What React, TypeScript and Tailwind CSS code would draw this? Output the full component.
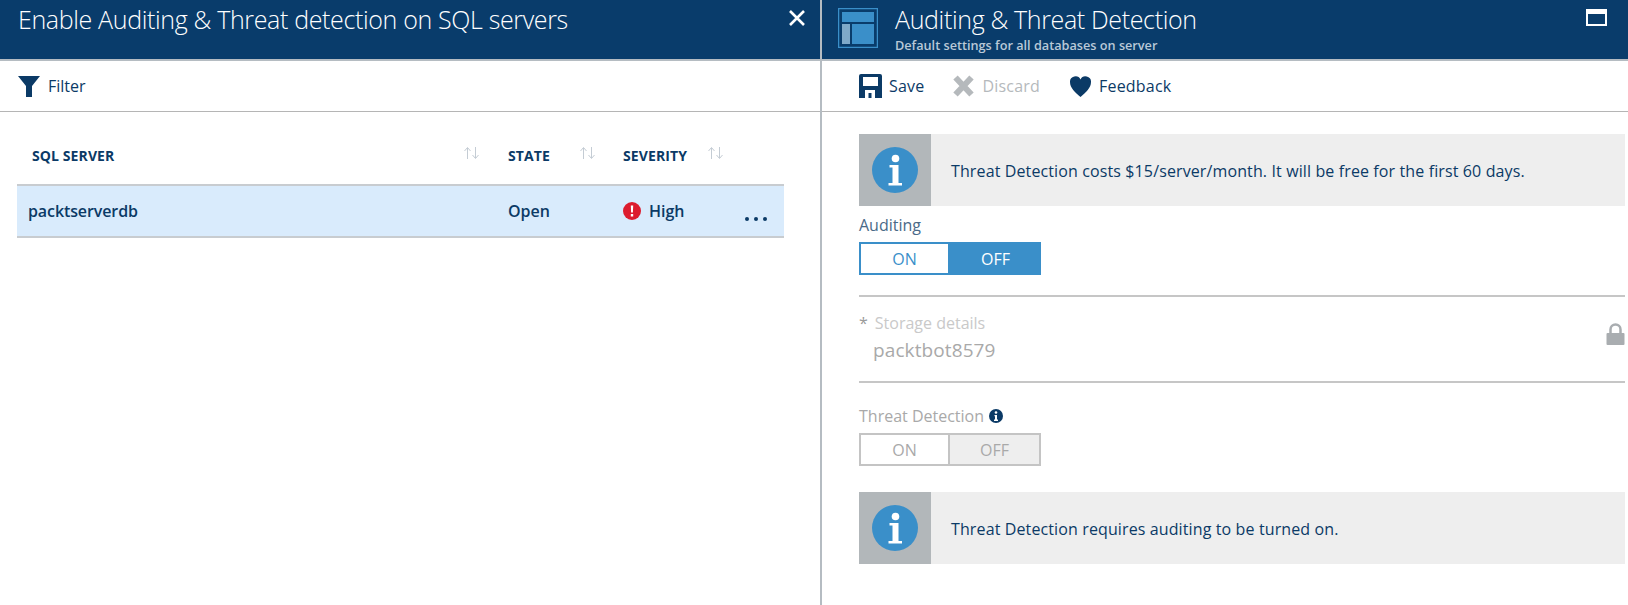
const font = { fontFamily: '"Open Sans", "Noto Sans", sans-serif' }

const SortArrows = ({ className }: { className: string }) => (
  <svg width="17" height="14" viewBox="0 0 17 14" fill="none" stroke="#c4ccd4" strokeWidth="1" className={className}>
    <path d="M4.5 13V2M1.5 5l3-3.5 3 3.5" />
    <path d="M12.5 1v11M9.5 9l3 3.5 3-3.5" />
  </svg>
)

const InfoTile = () => (
  <div className="flex h-full w-[72px] shrink-0 items-center justify-center bg-[#b2b7ba]">
    <svg width="46" height="46" viewBox="0 0 46 46">
      <circle cx="23" cy="23" r="23" fill="#3a8fc9" />
      <circle cx="23.5" cy="11.5" r="3.8" fill="#fff" />
      <path d="M17.5 18h9v18h3.5v2.500H16.500V36h4V20.500h-3z" fill="#fff" />
    </svg>
  </div>
)

const InfoBox = ({ text, className }: { text: string; className: string }) => (
  <div className={`flex h-[72px] items-center bg-[#eeeeee] ${className}`}>
    <InfoTile />
    <p className="ml-[20px] mt-[2px] text-[16px] tracking-[0.12px] text-[#0b3a66]">{text}</p>
  </div>
)

const Toggle = ({ disabled, className }: { disabled?: boolean; className: string }) => (
  <div className={`flex h-[33px] w-[182px] text-[16px] ${className}`}>
    <div
      className={`flex w-[91px] items-center justify-center border-2 bg-white ${
        disabled ? "border-[#c4c4c4] text-[#a9a9a9]" : "border-[#3a8fc9] text-[#3a8fc9]"
      }`}
    >
      ON
    </div>
    <div
      className={`flex w-[91px] items-center justify-center ${
        disabled ? "border-2 border-l-0 border-[#c4c4c4] bg-[#eeeeee] text-[#a9a9a9]" : "bg-[#3a8fc9] text-white"
      }`}
    >
      OFF
    </div>
  </div>
)

const headerCell = "text-[14px] font-bold tracking-[0.1px] text-[#0b3a66]"

export default function App() {
  return (
    <div style={font} className="flex h-[605px] w-[1628px] overflow-hidden bg-white text-[#0b3a66]">
      {/* left blade */}
      <div className="w-[820px] shrink-0">
        <div className="flex h-[61px] items-start justify-between border-b-2 border-[#b5bcc2] bg-[#093c6b] pl-[18px] pr-[14px]">
          <h1 className="mt-[3px] text-[25px] font-light leading-[32px] tracking-[-0.35px] text-white">
            Enable Auditing &amp; Threat detection on SQL servers
          </h1>
          <svg width="18" height="18" viewBox="0 0 18 18" stroke="#fff" strokeWidth="2.6" className="mt-[9px]">
            <path d="M2 2l14 14M16 2L2 16" />
          </svg>
        </div>
        <div className="flex h-[51px] items-center gap-[8px] border-b border-[#b5b5b5] pl-[18px]">
          <svg width="22" height="21" viewBox="0 0 22 21" fill="#0b3a66">
            <path d="M0 0h22l-8 10v11h-6V10z" />
          </svg>
          <span className="text-[16px]">Filter</span>
        </div>
        <div className="ml-[17px] mt-[31px] w-[767px]">
          <div className="flex h-[41px] items-start">
            <div className={`ml-[15px] mt-[2px] w-[431px] ${headerCell}`}>SQL SERVER</div>
            <SortArrows className="mt-[3px]" />
            <div className={`ml-[28px] mt-[2px] w-[71px] ${headerCell}`}>STATE</div>
            <SortArrows className="mt-[3px]" />
            <div className={`ml-[27px] mt-[2px] w-[84px] ${headerCell}`}>SEVERITY</div>
            <SortArrows className="mt-[3px]" />
          </div>
          <div className="flex h-[54px] items-center border-y-2 border-[#c8ccd0] bg-[#d9ebfc] text-[16px] font-semibold">
            <div className="ml-[11px] w-[480px] tracking-[-0.1px]">packtserverdb</div>
            <div className="w-[115px]">Open</div>
            <svg width="18" height="18" viewBox="0 0 18 18">
              <circle cx="9" cy="9" r="9" fill="#dc1c2e" />
              <path d="M7.800 3.500h2.400l-.3 7H8.100zM7.800 12h2.400v2.500H7.800z" fill="#fff" />
            </svg>
            <div className="ml-[8px] w-[96px]">High</div>
            <div className="mt-[15px] flex gap-[5px]">
              <span className="size-[4px] rounded-full bg-[#0b3a66]" />
              <span className="size-[4px] rounded-full bg-[#0b3a66]" />
              <span className="size-[4px] rounded-full bg-[#0b3a66]" />
            </div>
          </div>
        </div>
      </div>

      {/* right blade */}
      <div className="min-w-0 flex-1 border-l-2 border-[#b5bcc2]">
        <div className="flex h-[61px] items-start border-b-2 border-[#b5bcc2] bg-[#093c6b] pl-[16px] pr-[21px]">
          <svg width="40" height="40" viewBox="0 0 40 40" className="mt-[8px] shrink-0">
            <rect x="0.500" y="0.500" width="39" height="39" fill="none" stroke="#3a8fc9" strokeWidth="1.500" />
            <rect x="4" y="4" width="32" height="10" fill="#3a8fc9" />
            <rect x="4" y="16" width="8" height="20" fill="#7fa9c9" />
            <rect x="14" y="16" width="22" height="20" fill="#3a8fc9" />
          </svg>
          <div className="ml-[17px] min-w-0 flex-1">
            <h2 className="mt-[3px] text-[25px] font-light leading-[32px] tracking-[-0.35px] text-white">
              Auditing &amp; Threat Detection
            </h2>
            <p className="mt-[2px] text-[12.7px] font-semibold leading-[16px] text-[#b9c9d8]">Default settings for all databases on server</p>
          </div>
          <div className="mt-[9px] h-[17px] w-[21px] border-2 border-t-[5px] border-white" />
        </div>
        <div className="flex h-[51px] items-center border-b border-[#b5b5b5] pl-[37px]">
          <svg width="23" height="24" viewBox="0 0 23 24" fill="#0b3a66" className="mr-[7px]">
            <path fillRule="evenodd" d="M2 0h19a2 2 0 0 1 2 2v22H0V2a2 2 0 0 1 2-2zM4 3v9h15V3zM6 16v8h10v-8zM9.500 19h3v5h-3z" />
          </svg>
          <span className="text-[16px] tracking-[0.2px]">Save</span>
          <svg width="21" height="22" viewBox="0 0 21 22" stroke="#b5b9bc" strokeWidth="6" className="ml-[29px] mr-[8px]">
            <path d="M2.500 2.500l16 17M18.500 2.500l-16 17" />
          </svg>
          <span className="text-[16px] tracking-[0.2px] text-[#b5b9bc]">Discard</span>
          <svg width="21" height="21" viewBox="0 0 21 21" fill="#0b3a66" className="ml-[30px] mr-[8px]">
            <path d="M10.500 21C5 16 0 12 0 6a5.500 5.500 0 0 1 10.500-2.500A5.500 5.500 0 0 1 21 6c0 6-5 10-10.500 15z" />
          </svg>
          <span className="text-[16px] tracking-[0.2px]">Feedback</span>
        </div>

        <div className="pl-[37px] pr-[3px]">
          <InfoBox text="Threat Detection costs $15/server/month. It will be free for the first 60 days." className="mt-[22px]" />
          <div className="mt-[8px] text-[16px] leading-[22px] text-[#4a6a88]">Auditing</div>
          <Toggle className="mt-[6px]" />
          <div className="mt-[20px] h-[2px] bg-[#c6c6c6]" />
          <div className="mt-[16px] flex items-start justify-between">
            <div>
              <div className="text-[16px] leading-[20px] text-[#c9c9c9]">
                <span className="text-[#9a9a9a]">*</span>
                <span className="ml-[7px]">Storage details</span>
              </div>
              <div className="ml-[14px] mt-[4px] text-[19px] leading-[26px] tracking-[0.1px] text-[#a9a9a9]">packtbot8579</div>
            </div>
            <svg width="19" height="22" viewBox="0 0 19 22" className="mt-[10px]">
              <path d="M4.500 10V6.500a5 5 0 0 1 10 0V10" fill="none" stroke="#a9adb0" strokeWidth="2.500" />
              <rect x="0.500" y="10" width="18" height="12" rx="1" fill="#a9adb0" />
            </svg>
          </div>
          <div className="mt-[18px] h-[2px] bg-[#c6c6c6]" />
          <div className="mt-[22px] flex items-center gap-[5px] text-[16px] leading-[22px] text-[#a9a9a9]">
            Threat Detection
            <svg width="14" height="14" viewBox="0 0 14 14">
              <circle cx="7" cy="7" r="7" fill="#0b3a66" />
              <circle cx="7" cy="3.500" r="1.300" fill="#fff" />
              <path d="M5.500 6h2.500v4.500h1V12H5v-1.500h1V7.300h-.5z" fill="#fff" />
            </svg>
          </div>
          <Toggle disabled className="mt-[6px]" />
          <InfoBox text="Threat Detection requires auditing to be turned on." className="mt-[26px]" />
        </div>
      </div>
    </div>
  )
}
